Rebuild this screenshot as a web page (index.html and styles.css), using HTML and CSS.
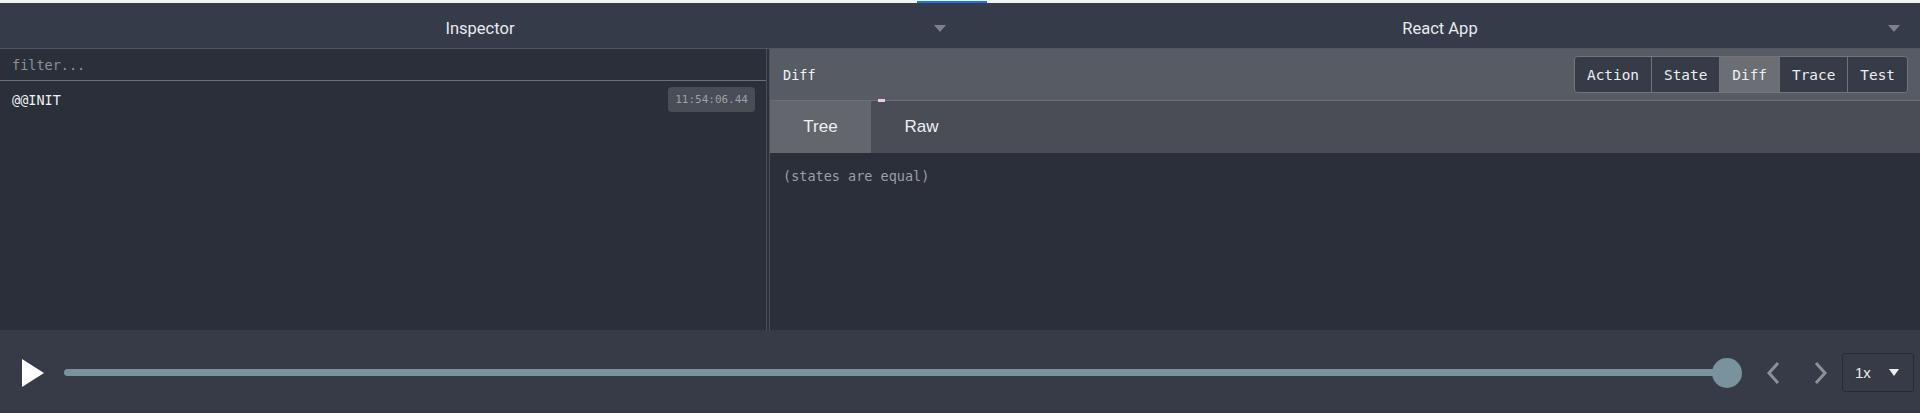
FILE: index.html
```html
<!DOCTYPE html>
<html>
<head>
<meta charset="utf-8">
<link rel="stylesheet" href="styles.css">
</head>
<body>
<div class="app">
  <div class="topstrip"><div class="indicator"></div></div>
  <header class="header">
    <div class="header-half"><span class="title">Inspector</span><span class="caret caret-left"></span></div>
    <div class="header-half"><span class="title">React App</span><span class="caret caret-right"></span></div>
  </header>
  <main class="main">
    <section class="left">
      <div class="filter">filter...</div>
      <div class="action-row">
        <span class="action-name">@@INIT</span>
        <span class="time">11:54:06.44</span>
      </div>
    </section>
    <div class="divider"></div>
    <section class="right">
      <div class="diff-bar">
        <span class="diff-title">Diff</span>
        <div class="tabs">
          <button class="tab">Action</button>
          <button class="tab">State</button>
          <button class="tab active">Diff</button>
          <button class="tab">Trace</button>
          <button class="tab">Test</button>
        </div>
        <span class="marker"></span>
      </div>
      <div class="subtabs">
        <div class="subtab active">Tree</div>
        <div class="subtab">Raw</div>
      </div>
      <div class="content">(states are equal)</div>
    </section>
  </main>
  <footer class="player">
    <svg class="play" width="22" height="28" viewBox="0 0 22 28"><polygon points="0,0 22,14 0,28" fill="#fff"/></svg>
    <div class="slider">
      <div class="track"></div>
      <div class="thumb"></div>
    </div>
    <svg class="nav" width="16" height="24" viewBox="0 0 16 24"><polyline points="12,2 3,12 12,22" fill="none" stroke="#8c9096" stroke-width="3"/></svg>
    <svg class="nav" width="16" height="24" viewBox="0 0 16 24"><polyline points="4,2 13,12 4,22" fill="none" stroke="#8c9096" stroke-width="3"/></svg>
    <div class="speed"><span>1x</span><span class="speed-caret"></span></div>
  </footer>
</div>
</body>
</html>
```

FILE: styles.css
```css
* { box-sizing: border-box; }
html, body { margin: 0; padding: 0; }
body { background: #2a2f3a; width: 1920px; height: 413px; overflow: hidden; }
.app { display: flex; flex-direction: column; height: 413px; }

.topstrip { height: 3px; background: #f1f3f4; padding-left: 917px; flex: none; }
.indicator { width: 70px; height: 2px; margin-top: 1px; background: #1a73e8; }

.header { height: 46px; flex: none; display: flex; background: #353b48; border-bottom: 1px solid #4f5663; }
.header-half { flex: 1; display: flex; align-items: center; justify-content: center; position: relative; padding-top: 5px; }
.title { font-family: Roboto, "Noto Sans", sans-serif; font-size: 16.5px; color: #e8eaee; }
.caret { position: absolute; top: 22px; width: 0; height: 0; border-left: 6px solid transparent; border-right: 6px solid transparent; border-top: 7px solid #7c818a; }
.caret-left { right: 14px; }
.caret-right { right: 20px; }

.main { flex: 1; display: flex; min-height: 0; }
.left { width: 767px; flex: none; display: flex; flex-direction: column; border-right: 1px solid #4b515c; }
.divider { width: 3px; flex: none; border-right: 1px solid #4b515c; }
.filter { height: 32px; border-bottom: 1px solid #6a7079; padding: 0 12px; display: flex; align-items: center; font-family: "DejaVu Sans Mono", monospace; font-size: 13.5px; color: #8d9199; }
.action-row { height: 37px; display: flex; align-items: center; justify-content: space-between; padding: 0 11px 0 12px; font-family: "DejaVu Sans Mono", monospace; }
.action-name { font-size: 13.5px; color: #f0f1f3; }
.time { font-size: 11px; color: #9da1a8; background: #494d56; border-radius: 4px; padding: 6px 7px; }

.right { flex: 1; display: flex; flex-direction: column; min-width: 0; }
.diff-bar { height: 52px; flex: none; display: flex; align-items: center; justify-content: space-between; background: #575b63; border-bottom: 1px solid #6c7077; padding: 0 12px 0 13px; position: relative; }
.diff-title { font-family: "DejaVu Sans Mono", monospace; font-size: 13.5px; color: #f2f3f5; }
.tabs { display: flex; border: 1px solid #71757c; border-radius: 4px; overflow: hidden; height: 37px; }
.tab { font-family: "DejaVu Sans Mono", monospace; font-size: 14.4px; color: #eceef1; background: #363b47; border: 0; border-left: 1px solid #6f737a; padding: 0 12px; margin: 0; }
.tab:first-child { border-left: 0; }
.tab.active { background: #6b6e75; }
.marker { position: absolute; left: 108px; bottom: -2px; width: 7px; height: 3px; background: #f4c6ec; }

.subtabs { height: 52px; flex: none; display: flex; background: #4a4d55; }
.subtab { width: 101px; display: flex; align-items: center; justify-content: center; font-family: "Liberation Sans", Arial, sans-serif; font-size: 17px; color: #eef0f2; }
.subtab.active { background: #63666d; }
.content { padding: 15px 13px; font-family: "DejaVu Sans Mono", monospace; font-size: 13.5px; color: #9b9fa6; }

.player { height: 83px; flex: none; background: #363b47; display: flex; align-items: center; padding: 2px 6px 0 22px; }
.play { flex: none; margin-right: 20px; }
.slider { flex: 1; position: relative; height: 30px; display: flex; align-items: center; margin-right: 24px; }
.track { height: 7px; border-radius: 4px; background: #7a929d; flex: 1; margin-right: 15px; }
.thumb { position: absolute; right: 0; top: 0; width: 30px; height: 30px; border-radius: 50%; background: #7a929d; }
.nav { flex: none; margin-right: 30px; }
.nav + .nav { margin-right: 14px; }
.speed { width: 72px; height: 39px; border: 1px solid #272b34; border-radius: 3px; display: flex; align-items: center; justify-content: space-between; padding: 0 14px 0 12px; font-family: "Liberation Sans", Arial, sans-serif; font-size: 15px; color: #e8eaee; }
.speed-caret { width: 0; height: 0; border-left: 5px solid transparent; border-right: 5px solid transparent; border-top: 7px solid #eef0f2; }
```
